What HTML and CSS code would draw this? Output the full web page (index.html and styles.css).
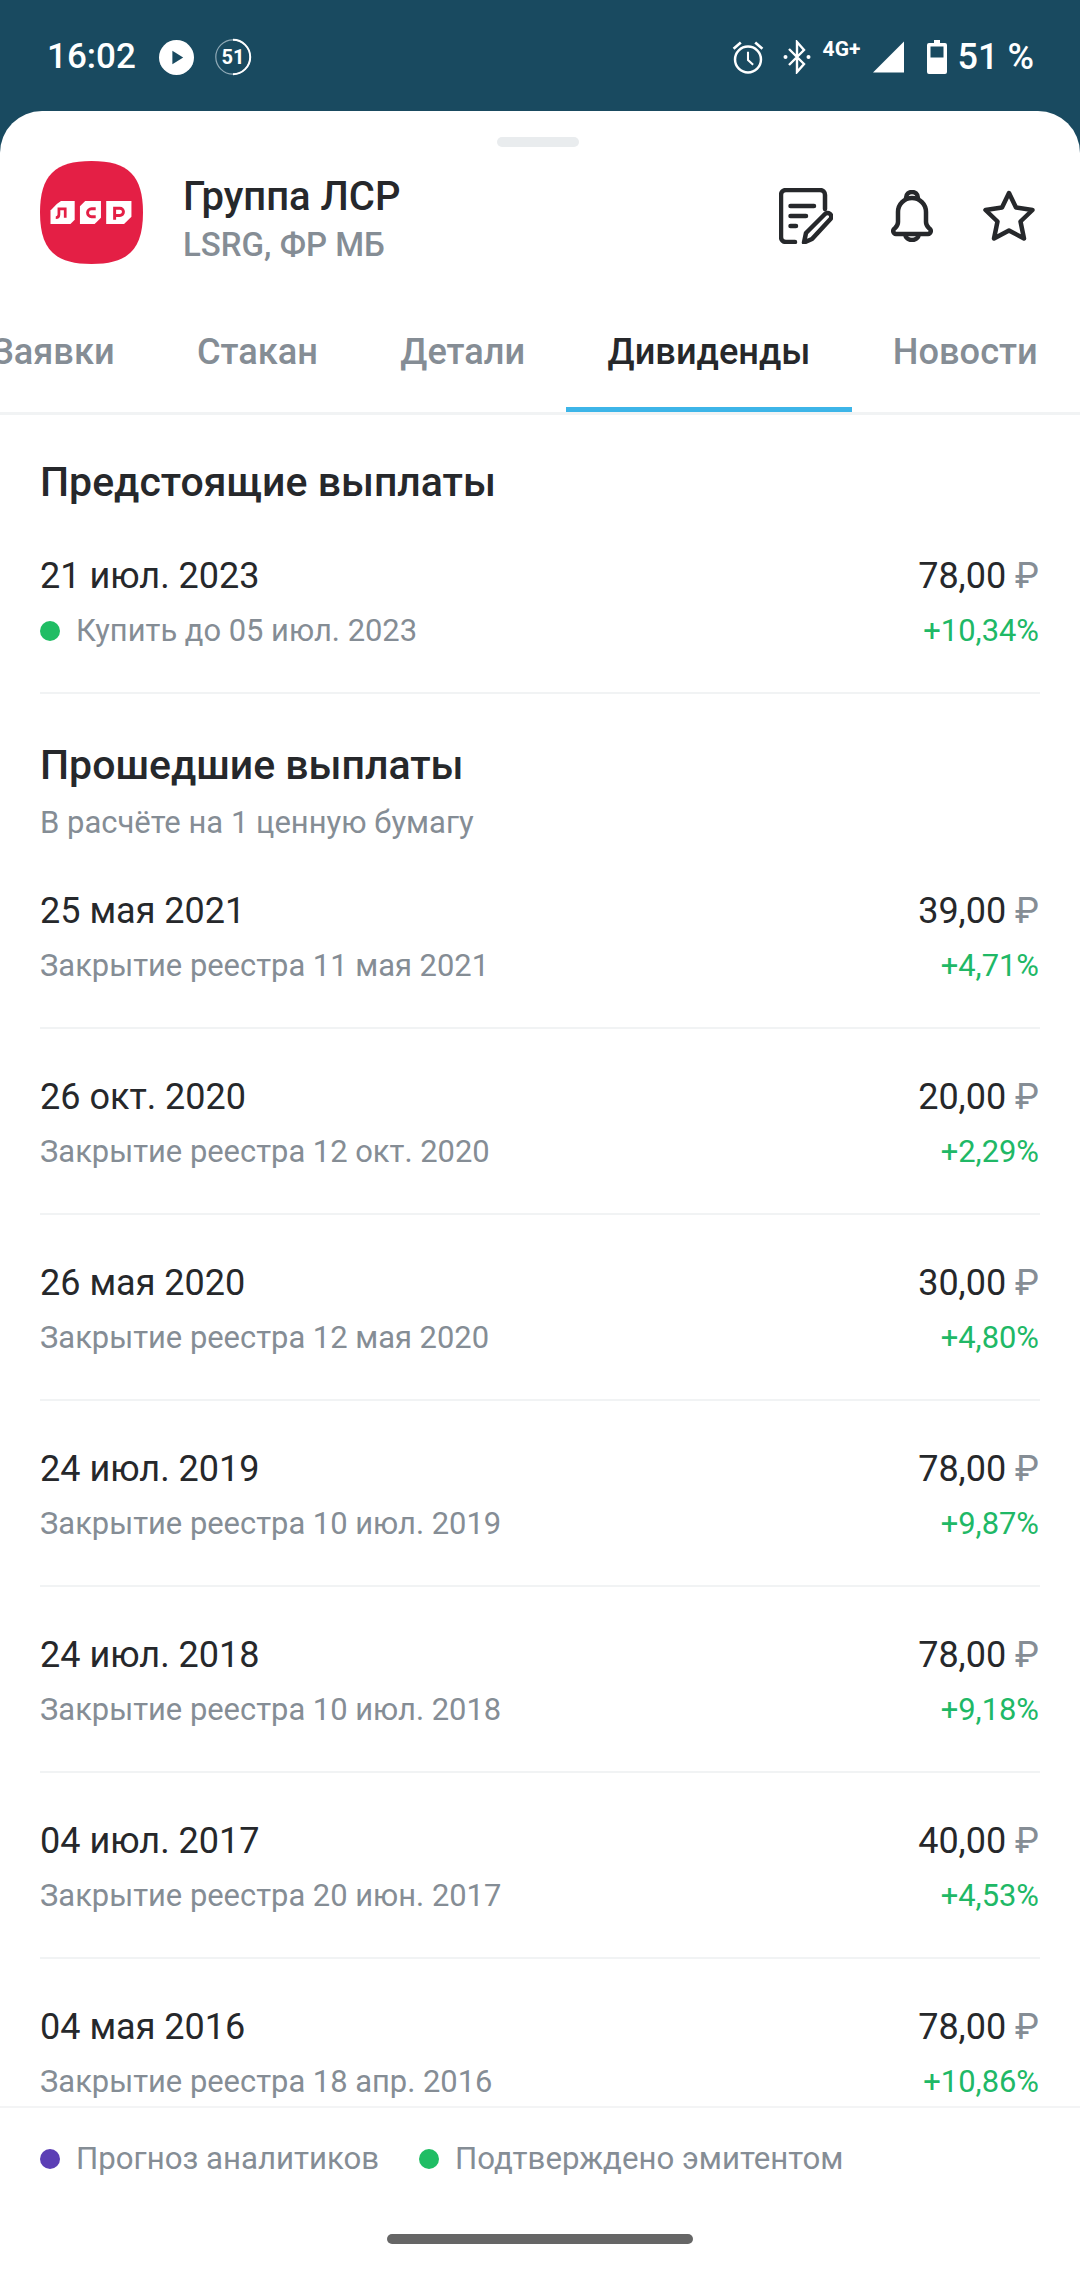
FILE: index.html
```html
<!DOCTYPE html>
<html lang="ru">
<head>
<meta charset="utf-8">
<title>Группа ЛСР</title>
<link rel="stylesheet" href="styles.css">
</head>
<body>
<div class="app">
  <div class="status">
    <div class="status-left">
      <span class="clock">16:02</span>
      <svg class="ic-play" viewBox="0 0 34 34"><circle cx="17" cy="17" r="17" fill="#fff"/><path d="M13 10.500v13l10.500-6.500z" fill="#194a60"/></svg>
      <span class="ring">
        <svg viewBox="0 0 38 38"><circle cx="19" cy="19" r="17.200" fill="none" stroke="#8fa9b6" stroke-width="1.200"/><path d="M19 1.800a17.200 17.200 0 0 1 0 34.400" fill="none" stroke="#fff" stroke-width="2"/></svg>
        <span class="ring-num">51</span>
      </span>
    </div>
    <div class="status-right">
      <svg class="ic-alarm" viewBox="0 0 32 34" fill="none" stroke="#fff" stroke-width="2.400"><circle cx="16" cy="19" r="12.600"/><path d="M16 11.500V19.500l5 4.500" stroke-width="2"/><path d="M2 8.500 9 2.500M30 8.500 23 2.500" stroke-width="2.600"/></svg>
      <svg class="ic-bt" viewBox="0 0 28 34" fill="none" stroke="#fff" stroke-width="2.400"><path d="M6 9 21 24l-7 8V2l7 8L6 25"/><circle cx="2.500" cy="17" r="2" fill="#fff" stroke="none"/><circle cx="25.500" cy="17" r="2" fill="#fff" stroke="none"/></svg>
      <span class="net">4G+</span>
      <svg class="ic-signal" viewBox="0 0 32 32"><path d="M0 32 32 0v32z" fill="#fff"/></svg>
      <svg class="ic-batt" viewBox="0 0 20 34"><path d="M2 3h5V0h6v3h5a2 2 0 0 1 2 2v27a2 2 0 0 1-2 2H2a2 2 0 0 1-2-2V5a2 2 0 0 1 2-2z" fill="#fff"/><rect x="3.500" y="6.500" width="13" height="11" fill="#194a60"/></svg>
      <span class="pct">51 %</span>
    </div>
  </div>

  <div class="sheet">
    <div class="handle"></div>
    <header class="head">
      <svg class="logo" viewBox="0 0 98 98">
        <path d="M49 0C84 0 98 14 98 49S84 98 49 98 0 84 0 49 14 0 49 0z" fill="#e41f45"/>
        <path d="M16 41 20 38H33V56L29 60H10V47z" fill="#fff"/>
        <path d="M38 43l5-5H58V54l-6 6H38z" fill="#fff"/>
        <path d="M63 38H87V53l-7 7H63z" fill="#fff"/>
        <path d="M15 54c2 0 3-1 3-3V45.500H24V54" fill="none" stroke="#e41f45" stroke-width="2.600"/>
        <path d="M53 45.500H49a3.500 3.500 0 0 0 0 7.500h4" fill="none" stroke="#e41f45" stroke-width="2.800"/>
        <path d="M71 56V45h5a3.200 3.200 0 0 1 0 6.800h-5" fill="none" stroke="#e41f45" stroke-width="2.800"/>
      </svg>
      <div class="title-box">
        <div class="name">Группа ЛСР</div>
        <div class="ticker">LSRG, ФР МБ</div>
      </div>
      <div class="actions">
        <svg class="ic-doc" viewBox="0 0 54 56" fill="none" stroke="#26282b" stroke-width="4.500" stroke-linecap="round" stroke-linejoin="round"><path d="M46 21V7a5 5 0 0 0-5-5H7a5 5 0 0 0-5 5v42a5 5 0 0 0 5 5h9"/><path d="M11.500 18H35M11.500 28H27M11.500 38H17"/><path d="M25 54.500 27 45 45.500 26.500a3.500 3.500 0 0 1 6 4.500L33 51z"/></svg>
        <svg class="ic-bell" viewBox="0 0 42 52" fill="none" stroke="#26282b" stroke-width="4.500" stroke-linejoin="round"><path d="M21 8a14 14 0 0 0-14 14v10c0 4-2 5-4 7a3 3 0 0 0 2 5h32a3 3 0 0 0 2-5c-2-2-4-3-4-7V22A14 14 0 0 0 21 8z"/><path d="M15 8c0-8 12-8 12 0"/><path d="M14 44c1 8 13 8 14 0"/></svg>
        <svg class="ic-star" viewBox="0 0 52 52" fill="none" stroke="#26282b" stroke-width="4.500" stroke-linejoin="round"><path d="M26 3 33 17.500 49.500 20 37.500 31.500 41 48.500 26 40.500 11 48.500 14.500 31.500 2.500 20 19 17.500z"/></svg>
      </div>
    </header>

    <nav class="tabs">
      <span class="tab">Заявки</span>
      <span class="tab">Стакан</span>
      <span class="tab">Детали</span>
      <span class="tab tab-on">Дивиденды</span>
      <span class="tab">Новости</span>
    </nav>

    <main class="list">
      <h2 class="h">Предстоящие выплаты</h2>
      <div class="row">
        <div class="col">
          <div class="date">21 июл. 2023</div>
          <div class="sub"><i class="dot green"></i>Купить до 05 июл. 2023</div>
        </div>
        <div class="col right">
          <div class="date">78,00 <span class="rub">₽</span></div>
          <div class="gain">+10,34%</div>
        </div>
      </div>

      <h2 class="h h2">Прошедшие выплаты</h2>
      <div class="note">В расчёте на 1 ценную бумагу</div>

      <div class="row">
        <div class="col"><div class="date">25 мая 2021</div><div class="sub">Закрытие реестра 11 мая 2021</div></div>
        <div class="col right"><div class="date">39,00 <span class="rub">₽</span></div><div class="gain">+4,71%</div></div>
      </div>
      <div class="row">
        <div class="col"><div class="date">26 окт. 2020</div><div class="sub">Закрытие реестра 12 окт. 2020</div></div>
        <div class="col right"><div class="date">20,00 <span class="rub">₽</span></div><div class="gain">+2,29%</div></div>
      </div>
      <div class="row">
        <div class="col"><div class="date">26 мая 2020</div><div class="sub">Закрытие реестра 12 мая 2020</div></div>
        <div class="col right"><div class="date">30,00 <span class="rub">₽</span></div><div class="gain">+4,80%</div></div>
      </div>
      <div class="row">
        <div class="col"><div class="date">24 июл. 2019</div><div class="sub">Закрытие реестра 10 июл. 2019</div></div>
        <div class="col right"><div class="date">78,00 <span class="rub">₽</span></div><div class="gain">+9,87%</div></div>
      </div>
      <div class="row">
        <div class="col"><div class="date">24 июл. 2018</div><div class="sub">Закрытие реестра 10 июл. 2018</div></div>
        <div class="col right"><div class="date">78,00 <span class="rub">₽</span></div><div class="gain">+9,18%</div></div>
      </div>
      <div class="row">
        <div class="col"><div class="date">04 июл. 2017</div><div class="sub">Закрытие реестра 20 июн. 2017</div></div>
        <div class="col right"><div class="date">40,00 <span class="rub">₽</span></div><div class="gain">+4,53%</div></div>
      </div>
      <div class="row">
        <div class="col"><div class="date">04 мая 2016</div><div class="sub">Закрытие реестра 18 апр. 2016</div></div>
        <div class="col right"><div class="date">78,00 <span class="rub">₽</span></div><div class="gain">+10,86%</div></div>
      </div>
    </main>

    <footer class="foot">
      <div class="legend">
        <span class="leg"><i class="dot violet"></i>Прогноз аналитиков</span>
        <span class="leg"><i class="dot green"></i>Подтверждено эмитентом</span>
      </div>
      <div class="homebar"></div>
    </footer>
  </div>
</div>
</body>
</html>
```
FILE: styles.css
```css
* { box-sizing: border-box; }
html, body { margin: 0; padding: 0; }
body { width: 1080px; height: 2270px; overflow: hidden; background: #194a60; font-family: Roboto, "Noto Sans", sans-serif; color: #26282b; }
.app { width: 1080px; height: 2270px; display: flex; flex-direction: column; }

.status { height: 111px; flex: none; background: #194a60; color: #fff; display: flex; justify-content: space-between; align-items: flex-start; padding: 37px 46px 0 47px; }
.status-left { display: flex; align-items: center; height: 40px; }
.clock { font-size: 35px; line-height: 40px; font-weight: 500; width: 88px; }
.ic-play { width: 35px; height: 35px; margin-left: 24px; }
.ring { position: relative; width: 38px; height: 38px; margin-left: 20px; }
.ring svg { width: 38px; height: 38px; display: block; }
.ring-num { position: absolute; inset: 0; text-align: center; font-size: 20px; line-height: 38px; font-weight: 700; }
.status-right { display: flex; align-items: center; height: 40px; }
.ic-alarm { width: 34px; height: 35px; }
.ic-bt { width: 28px; height: 34px; margin-left: 18px; }
.net { font-size: 21px; font-weight: 700; line-height: 22px; width: 44px; margin: -16px 0 0 12px; white-space: nowrap; }
.ic-signal { width: 31px; height: 32px; margin-left: 6px; }
.ic-batt { width: 20px; height: 34px; margin-left: 23px; }
.pct { font-size: 36px; line-height: 40px; font-weight: 500; margin-left: 11px; white-space: nowrap; }

.sheet { flex: 1; min-height: 0; background: #fff; border-radius: 42px 42px 0 0; display: flex; flex-direction: column; }
.handle { width: 82px; height: 10px; border-radius: 5px; background: #e9ecee; margin: 26px auto 0 497px; flex: none; }
.head { flex: none; height: 102px; margin-top: 14px; padding: 0 45px 0 40px; display: flex; align-items: center; }
.logo { width: 103px; height: 103px; flex: none; }
.title-box { margin-left: 40px; flex: 1; padding-top: 15px; }
.name { font-size: 40px; line-height: 50px; font-weight: 500; color: #26282b; white-space: nowrap; }
.ticker { font-size: 33px; line-height: 46px; font-weight: 500; color: #858d95; white-space: nowrap; }
.actions { display: flex; align-items: center; padding-top: 8px; }
.ic-doc { width: 54px; height: 56px; }
.ic-bell { width: 42px; height: 52px; margin-left: 58px; }
.ic-star { width: 52px; height: 52px; margin-left: 50px; }

.tabs { flex: none; height: 152px; padding-top: 36px; border-bottom: 3px solid #f1f3f4; display: flex; overflow: hidden; margin-left: -49.400px; width: 1130px; }
.tab { flex: none; padding: 0 41.200px; height: 113px; line-height: 106px; font-size: 36.200px; font-weight: 500; color: #858d95; white-space: nowrap; }
.tab-on { color: #26282b; border-bottom: 5px solid #3db5e8; }

.list { flex: 1; min-height: 0; overflow: hidden; padding: 43px 40px 0; }
.h { margin: 0 0 2px; font-size: 41px; line-height: 48px; font-weight: 500; color: #26282b; }
.h2 { margin: 47px 0 0; }
.note { font-size: 31px; line-height: 40px; margin-top: 14px; color: #858d95; }
.row { display: flex; justify-content: space-between; padding: 46px 0 41px; border-bottom: 2px solid #f1f3f4; }
.col { display: flex; flex-direction: column; gap: 13px; }
.right { align-items: flex-end; padding-right: 1px; }
.date { font-size: 36px; line-height: 44px; color: #26282b; white-space: nowrap; }
.rub { color: #858d95; }
.sub { font-size: 30.900px; line-height: 40px; color: #858d95; display: flex; align-items: center; white-space: nowrap; }
.gain { font-size: 30.900px; line-height: 40px; color: #20b866; white-space: nowrap; }
.dot { width: 20px; height: 20px; border-radius: 50%; flex: none; margin-right: 16px; display: block; }
.green { background: #20bd64; }
.violet { background: #5c3fb5; }

.foot { flex: none; height: 164px; border-top: 2px solid #f3f4f5; display: flex; flex-direction: column; background: #fff; }
.legend { display: flex; padding: 31px 40px 0; gap: 40px; }
.leg { display: flex; align-items: center; font-size: 31.200px; line-height: 40px; color: #858d95; white-space: nowrap; }
.homebar { width: 306px; height: 10px; border-radius: 5px; background: #666; margin: 55px auto 0; }
```
